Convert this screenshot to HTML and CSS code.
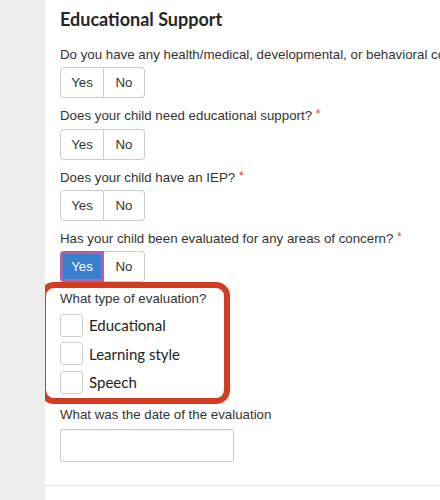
FILE: index.html
```html
<!DOCTYPE html>
<html>
<head>
<meta charset="utf-8">
<link rel="stylesheet" href="styles.css">
</head>
<body>
<div class="page">
  <div class="sidebar"></div>
  <main class="main">
    <div class="content">
      <h2 class="title">Educational Support</h2>

      <div class="field">
        <div class="label">Do you have any health/medical, developmental, or behavioral concerns?</div>
        <div class="btn-group">
          <button class="btn yes">Yes</button><button class="btn no">No</button>
        </div>
      </div>

      <div class="field">
        <div class="label">Does your child need educational support? <span class="req">*</span></div>
        <div class="btn-group">
          <button class="btn yes">Yes</button><button class="btn no">No</button>
        </div>
      </div>

      <div class="field">
        <div class="label">Does your child have an IEP? <span class="req">*</span></div>
        <div class="btn-group">
          <button class="btn yes">Yes</button><button class="btn no">No</button>
        </div>
      </div>

      <div class="field">
        <div class="label">Has your child been evaluated for any areas of concern? <span class="req">*</span></div>
        <div class="btn-group">
          <button class="btn yes active">Yes</button><button class="btn no">No</button>
        </div>
      </div>

      <div class="highlight">
        <div class="label">What type of evaluation?</div>
        <div class="checks">
          <label class="check"><span class="box"></span><span class="check-text">Educational</span></label>
          <label class="check"><span class="box"></span><span class="check-text">Learning style</span></label>
          <label class="check"><span class="box"></span><span class="check-text">Speech</span></label>
        </div>
      </div>

      <div class="label date-label">What was the date of the evaluation</div>
      <div class="input"></div>
    </div>
    <div class="footer">
      <div class="fbtn back"></div>
      <div class="fbtn next"></div>
    </div>
  </main>
</div>
</body>
</html>
```
FILE: styles.css
```css
html, body {
  margin: 0;
  padding: 0;
  background: #ffffff;
}
body {
  width: 440px;
  height: 500px;
  overflow: hidden;
  font-family: "Liberation Sans", Arial, sans-serif;
  font-size: 13.3px;
  color: #333333;
}
.page {
  display: flex;
  height: 500px;
}
.sidebar {
  width: 45px;
  flex: none;
  background: #ededed;
}
.main {
  flex: 1;
  min-width: 0;
  background: #ffffff;
  overflow: hidden;
}
.content {
  padding: 0 0 0 15px;
}
.title {
  margin: 0;
  padding-top: 6px;
  height: 45px;
  box-sizing: border-box;
  font-family: "Lato", sans-serif;
  font-weight: 700;
  font-size: 18px;
  line-height: 26px;
  color: #262626;
}
.label {
  height: 19.33px;
  line-height: 19.33px;
  white-space: nowrap;
  color: #333333;
}
.req {
  color: #e0443a;
  font-size: 12px;
  line-height: 0;
  vertical-align: 2px;
}
.field .label {
  margin-bottom: 3px;
}
.btn-group {
  display: flex;
  margin-bottom: 8px;
}
.btn {
  height: 31px;
  box-sizing: border-box;
  border: 1px solid #cccccc;
  background: #ffffff;
  font-family: "Liberation Sans", Arial, sans-serif;
  font-size: 13.3px;
  color: #333333;
  padding: 0;
  margin: 0;
}
.btn.yes {
  width: 44px;
  border-radius: 4px 0 0 4px;
}
.btn.no {
  width: 41px;
  border-left: none;
  border-radius: 0 4px 4px 0;
}
.btn.active {
  background: #3a7fcb;
  color: #ffffff;
  border: 2px solid #c25a9e;
  box-shadow: inset 0 0 0 1px #6a88c8;
}
.highlight {
  margin: -8px 0 0 -20px;
  width: 190px;
  box-sizing: border-box;
  border: 6px solid #d23c23;
  border-radius: 14px;
  padding: 1px 0 4px 14px;
}
.checks {
  display: flex;
  flex-direction: column;
  gap: 5.5px;
  margin-top: 5px;
}
.check {
  display: flex;
  align-items: center;
  height: 23px;
}
.box {
  width: 23px;
  height: 23px;
  box-sizing: border-box;
  border: 1px solid #cfcfcf;
  border-radius: 3px;
  background: #ffffff;
  flex: none;
}
.check-text {
  margin-left: 6px;
  font-family: "Lato", sans-serif;
  font-size: 15px;
  color: #222222;
}
.date-label {
  margin-top: 1px;
  margin-bottom: 5px;
}
.input {
  width: 174px;
  height: 33px;
  box-sizing: border-box;
  border: 1px solid #cccccc;
  border-radius: 2px;
  box-shadow: inset 0 1px 1px rgba(0,0,0,0.05);
}
.footer {
  margin-top: 23px;
  border-top: 1px solid #e3e3e3;
  padding: 15px 0 0 15px;
  display: flex;
  gap: 10px;
}
.fbtn {
  height: 30px;
  box-sizing: border-box;
  border-radius: 4px;
}
.fbtn.back {
  width: 67px;
  border: 1px solid #bbbbbb;
  background: #ffffff;
}
.fbtn.next {
  width: 46px;
  background: #3a7fcb;
  border: 1px solid #3572b8;
}
```
